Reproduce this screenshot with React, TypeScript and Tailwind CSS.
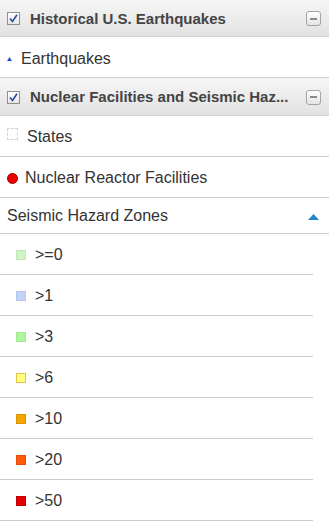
import React from "react";

function CheckBox() {
  return (
    <div className="w-[13px] h-[13px] border border-[#8f8f8f] bg-gradient-to-b from-[#ffffff] to-[#e6e6e6] flex items-center justify-center shrink-0">
      <svg width="9" height="9" viewBox="0 0 9 9">
        <path d="M1 4.5 L3.5 7.5 L8 0.8" fill="none" stroke="#2b4a9c" strokeWidth="1.6" />
      </svg>
    </div>
  );
}

function MinusBtn() {
  return (
    <div className="w-[15px] h-[15px] rounded-[3px] border border-[#a3a3a3] bg-gradient-to-b from-[#ffffff] to-[#e4e4e4] flex items-center justify-center shrink-0">
      <div className="w-[7px] h-[2px] bg-[#8a8a8a]" />
    </div>
  );
}

function Header({ title, h }: { title: string; h: string }) {
  return (
    <div className={`${h} border-b border-[#d0d0d0] bg-gradient-to-b from-[#f6f6f6] to-[#e2e2e2] flex items-center pl-[7px] pr-[8px] pt-[1px]`}>
      <CheckBox />
      <div className="ml-[10px] flex-1 min-w-0 whitespace-nowrap font-bold text-[15px] leading-[18px] text-[#444444]">{title}</div>
      <MinusBtn />
    </div>
  );
}

const legend = [
  { label: ">=0", fill: "#cff5c6", border: "#c2e6b8" },
  { label: ">1", fill: "#c2d3f6", border: "#b3c5ea" },
  { label: ">3", fill: "#aef79e", border: "#9fe890" },
  { label: ">6", fill: "#ffff7f", border: "#e6c24a" },
  { label: ">10", fill: "#f5a900", border: "#d99500" },
  { label: ">20", fill: "#ff590c", border: "#e44c08" },
  { label: ">50", fill: "#e30000", border: "#c00000" },
];

export default function App() {
  return (
    <div className="w-[329px] h-[526px] bg-white overflow-hidden text-[#333333]" style={{ fontFamily: '"Liberation Sans", Arial, sans-serif' }}>
      <Header title="Historical U.S. Earthquakes" h="h-[37px]" />
      <div className="h-[41px] border-b border-[#cccccc] flex items-center pl-[7px] pt-[4px] text-[16px] leading-[18px]">
        <svg width="5" height="4" viewBox="0 0 5 4" className="mr-[9px]">
          <path d="M2.5 0 L5 4 L0 4 Z" fill="#1f4fd6" />
        </svg>
        <span>Earthquakes</span>
      </div>
      <Header title="Nuclear Facilities and Seismic Haz..." h="h-[38px]" />
      <div className="h-[41px] border-b border-[#cccccc] flex items-center pl-[7px] pt-[1px] text-[16px] leading-[18px]">
        <div className="w-[11px] h-[12px] border border-dashed border-[#d4d4d4] mr-[9px] mb-[5px]" />
        <span>States</span>
      </div>
      <div className="h-[41px] border-b border-[#cccccc] flex items-center pl-[7px] pt-[2px] text-[16px] leading-[18px]">
        <div className="w-[11px] h-[11px] rounded-full bg-[#ee0000] border border-[#990000] mr-[7px]" />
        <span>Nuclear Reactor Facilities</span>
      </div>
      <div className="h-[36px] border-b border-[#cccccc] flex items-center pl-[7px] pr-[10px] text-[16px] leading-[18px]">
        <span className="flex-1">Seismic Hazard Zones</span>
        <svg width="11" height="6" viewBox="0 0 11 6" className="mt-[3px]">
          <path d="M5.5 0 L11 6 L0 6 Z" fill="#2189c9" />
        </svg>
      </div>
      <div className="w-[313px]">
        {legend.map((l) => (
          <div key={l.label} className="h-[41px] border-b border-[#cccccc] flex items-center pl-[16px] pt-[1px] text-[16px] leading-[18px]">
            <div className="w-[10px] h-[10px] border mr-[9px]" style={{ backgroundColor: l.fill, borderColor: l.border }} />
            <span>{l.label}</span>
          </div>
        ))}
      </div>
    </div>
  );
}
